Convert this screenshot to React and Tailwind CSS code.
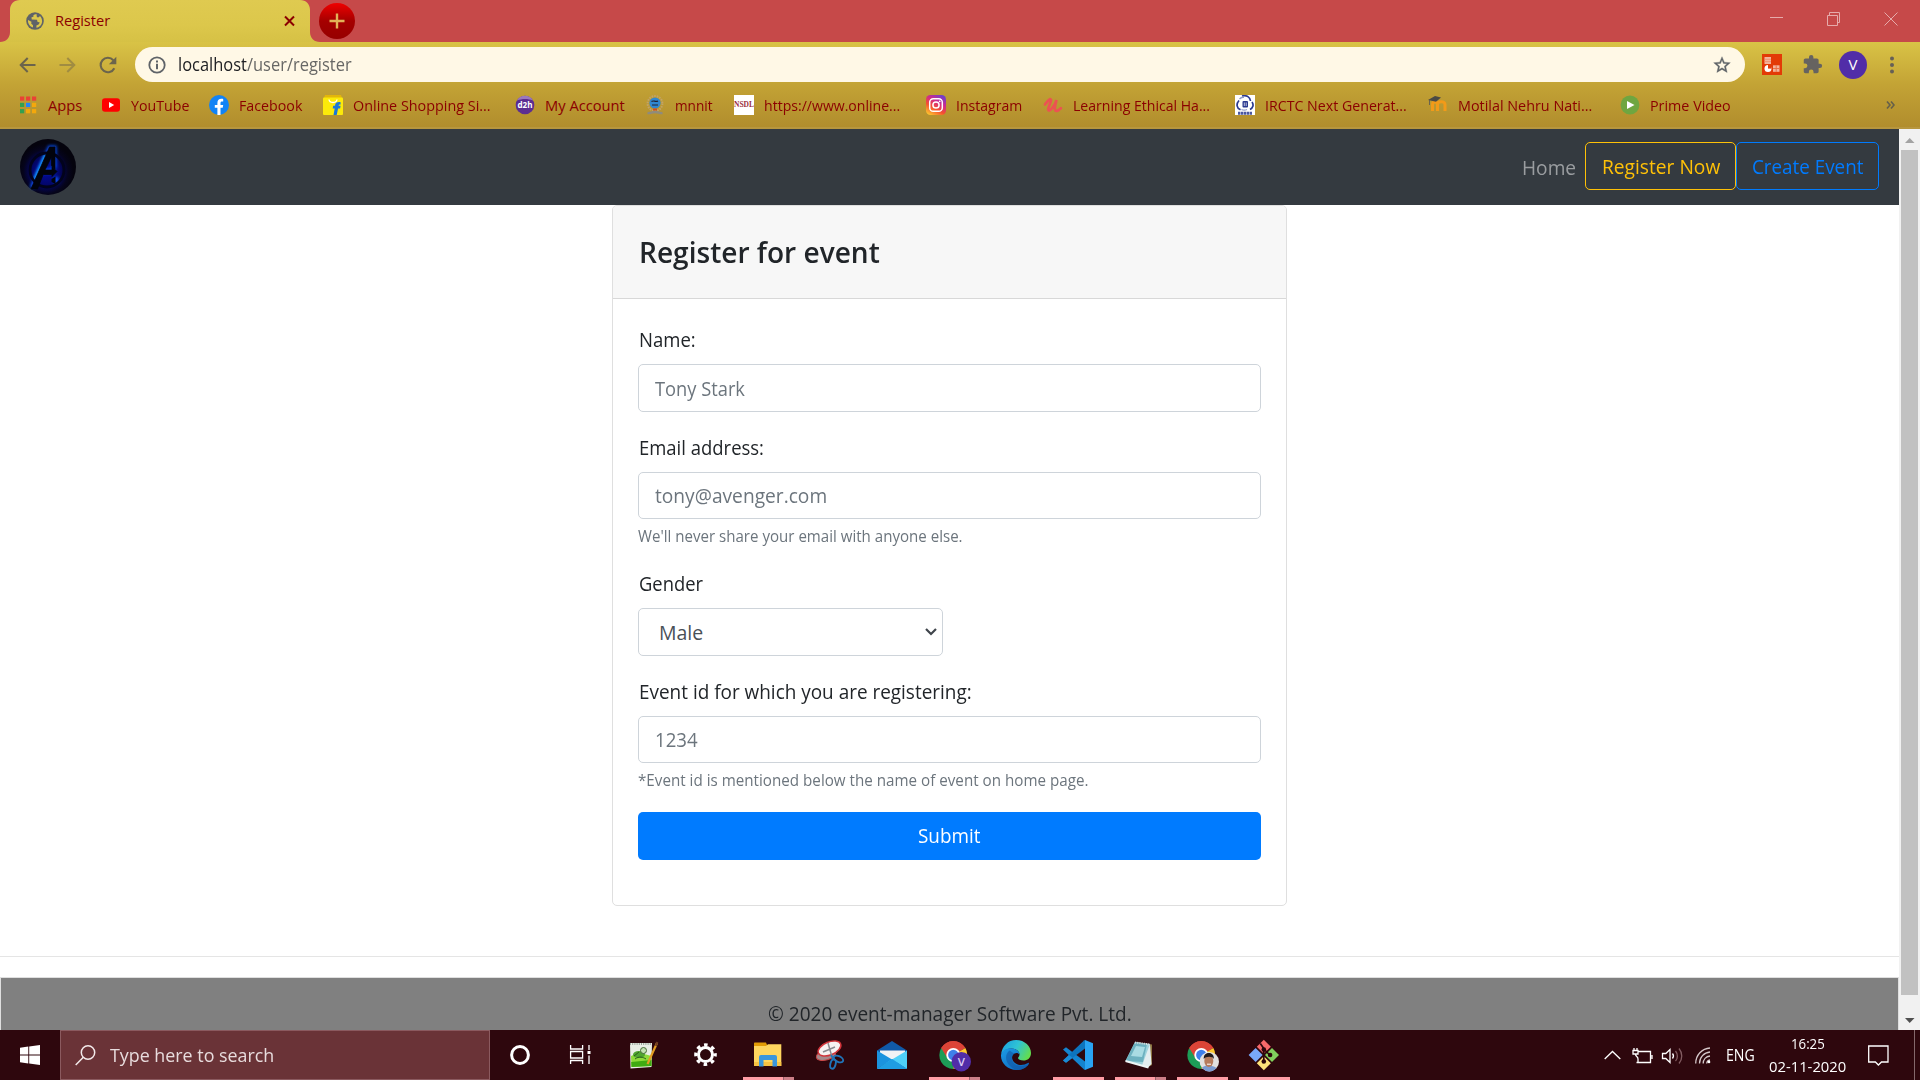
import React, { useLayoutEffect, useRef, useState } from "react";

/* Single line of text condensed or widened to an exact width. */
function Fit({ w, className = "", children }) {
  const ref = useRef(null);
  const [scale, setScale] = useState(1);
  useLayoutEffect(() => {
    if (ref.current && ref.current.offsetWidth) setScale(w / ref.current.offsetWidth);
  }, [w]);
  return (
    <span className={"inline-block whitespace-nowrap text-left " + className} style={{ width: w }}>
      <span ref={ref} className="inline-block origin-left whitespace-nowrap" style={{ transform: `scaleX(${scale})` }}>
        {children}
      </span>
    </span>
  );
}

/* ---------- bookmark icons, 20 x 20 ---------- */
const Icon20 = ({ children }) => (
  <svg width="20" height="20" viewBox="0 0 20 20" className="shrink-0">{children}</svg>
);

const AppsIcon = () => (
  <Icon20>
    {["#e94335", "#e94335", "#e94335", "#34a04f", "#2684f5", "#f4a80c", "#34a04f", "#f4a80c", "#f4a80c"].map((c, i) => (
      <rect key={i} x={2 + (i % 3) * 6} y={1.5 + Math.floor(i / 3) * 6.3} width="4.2" height="4.2" fill={c} />
    ))}
  </Icon20>
);
const YouTubeIcon = () => (
  <Icon20>
    <rect x="1" y="3.2" width="18" height="13.6" rx="3" fill="#f00" />
    <path d="M8 7l5.2 3L8 13z" fill="#fff" />
  </Icon20>
);
const FacebookIcon = () => (
  <Icon20>
    <circle cx="10" cy="10" r="10" fill="#1183f5" />
    <path d="M8.4 20v-7.2H5.8V10h2.6V7.900c0-2.700 1.600-4.100 3.900-4.100.9 0 1.900.2 1.900.2v2.500h-1.100c-1.200 0-1.600.7-1.600 1.500v2h2.700l-.5 2.800h-2.200V20z" fill="#fff" />
  </Icon20>
);
const FlipkartIcon = () => (
  <Icon20>
    <path d="M2 0h16l1 3H1z" fill="#e3b60a" />
    <rect x="0" y="2.6" width="20" height="17.4" rx="1" fill="#fcea0a" />
    <path d="M6 4.500c.5 4 7.500 4 8 0" stroke="#fff" strokeWidth="1.3" fill="none" />
    <path d="M17.600 7.200c-4.200-.6-5.400 1-5.600 3.600h-1.800l-.5 2.600h2L10.500 20h3.200l1.400-6.600h2l.5-2.600h-2c.2-1 .6-1.400 2-1.200z" fill="#1c78d8" />
  </Icon20>
);
const D2hIcon = () => (
  <Icon20>
    <circle cx="10" cy="10" r="9.3" fill="#5c2d91" />
    <path d="M2 5.500a9.200 9.200 0 0116 0c-5-2-11-2-16 0z" fill="#9a78bd" />
    <text x="2.500" y="13" fontFamily="Open Sans" fontSize="9" fontWeight="700" fill="#fff" textLength="15" lengthAdjust="spacingAndGlyphs">d2h</text>
  </Icon20>
);
const MnnitIcon = () => (
  <Icon20>
    <circle cx="10" cy="8.500" r="7.400" fill="none" stroke="#c2a367" strokeWidth="2" strokeDasharray="1.600 1" />
    <circle cx="10" cy="8" r="5.600" fill="#2f86cf" />
    <path d="M6.500 6.500c2-1.600 4 1 6.500-.6M7 10h6" stroke="#223" strokeWidth="1.200" fill="none" />
    <path d="M2.500 18c3 .6 4-1 7.500-1s4.500 1.600 7.500 1" stroke="#8f8b7c" strokeWidth="2.400" fill="none" />
    <path d="M8 14.500h4" stroke="#d14c20" strokeWidth="2" />
  </Icon20>
);
const NsdlIcon = () => (
  <Icon20>
    <rect width="20" height="20" fill="#fff" />
    <text x="0" y="12.200" fontFamily="Liberation Serif" fontSize="7.500" fontWeight="700" fill="#9b2f3e" textLength="20" lengthAdjust="spacingAndGlyphs">NSDL</text>
  </Icon20>
);
const InstagramIcon = () => (
  <Icon20>
    <defs>
      <linearGradient id="insta" x1="0.2" y1="1" x2="0.8" y2="0">
        <stop offset="0" stopColor="#fdc12f" />
        <stop offset=".35" stopColor="#f5502f" />
        <stop offset=".65" stopColor="#cf2a8c" />
        <stop offset="1" stopColor="#6a3fd0" />
      </linearGradient>
    </defs>
    <rect width="20" height="20" rx="4.500" fill="url(#insta)" />
    <rect x="3.700" y="3.700" width="12.600" height="12.600" rx="3.600" fill="none" stroke="#fff" strokeWidth="1.500" />
    <circle cx="10" cy="10" r="3.100" fill="none" stroke="#fff" strokeWidth="1.500" />
    <circle cx="13.700" cy="6.300" r=".9" fill="#fff" />
  </Icon20>
);
const UdemyIcon = () => (
  <Icon20>
    <path d="M2 9.500C4.500 6.500 6 4 7.600 4.200 9.500 4.800 5 11.500 5.200 14.300c.3 3.700 6.300-2.300 8.300-9.300-1.200 4.500-2.700 10-.6 10.800 1.600.6 3.300-1 5-2.600" fill="none" stroke="#ec5252" strokeWidth="2.700" strokeLinecap="round" />
  </Icon20>
);
const IrctcIcon = () => (
  <Icon20>
    <rect width="20" height="20" fill="#fff" />
    <path d="M7 1c5-1 8 1 8.500 5M17 7c2 3 1 6-2 7.500M4 5.500C1 9 1.500 13 5.500 14.800" fill="none" stroke="#2b3990" strokeWidth="1.700" />
    <path d="M4.500 4c1.500-1.600 3-2 4.500-1.600M12 14.500c-2 1-4 .8-5.500 0" stroke="#8f99c9" strokeWidth="1.300" fill="none" />
    <rect x="7.500" y="6" width="5.500" height="6.500" rx="1" fill="#2b3990" />
    <path d="M9.300 7.500v3.500M11.200 7.500v3.500" stroke="#fff" strokeWidth=".7" />
    <path d="M3 18.300h14" stroke="#4b57a0" strokeWidth="3" strokeDasharray="2.400 .5" />
  </Icon20>
);
const MoodleIcon = () => (
  <Icon20>
    <path d="M4.500 16V9.500c0-3.500 5-3.500 5 0V16M9.500 9.500c0-3.500 7.500-4 7.500 0V16" fill="none" stroke="#f29a18" strokeWidth="3" />
    <path d="M0 5l7-4 6 1.500-5 4.300z" fill="#4b4a45" />
    <path d="M1.500 5v5" stroke="#555" strokeWidth=".8" />
  </Icon20>
);
const PrimeIcon = () => (
  <Icon20>
    <circle cx="10" cy="10" r="9.400" fill="#6fa640" />
    <path d="M7 6l7.500 4L7 14z" fill="#fff" />
  </Icon20>
);

const bookmarks = [
  [AppsIcon, "Apps", 34],
  [YouTubeIcon, "YouTube", 58],
  [FacebookIcon, "Facebook", 63],
  [FlipkartIcon, "Online Shopping Si...", 138],
  [D2hIcon, "My Account", 80],
  [MnnitIcon, "mnnit", 38],
  [NsdlIcon, "https://www.online...", 136],
  [InstagramIcon, "Instagram", 66],
  [UdemyIcon, "Learning Ethical Ha...", 137],
  [IrctcIcon, "IRCTC Next Generat...", 142],
  [MoodleIcon, "Motilal Nehru Nati...", 134],
  [PrimeIcon, "Prime Video", 81],
];

function TabStrip() {
  return (
    <div className="flex h-[42px] bg-[#c64949]">
      <div className="relative flex h-[42px] w-[320px] items-center">
        <svg width="320" height="42" viewBox="0 0 320 42" className="absolute inset-0">
          <defs>
            <linearGradient id="tab" x1="0" y1="0" x2="0" y2="1">
              <stop offset="0" stopColor="#dfca50" />
              <stop offset=".6" stopColor="#dcc74b" />
              <stop offset="1" stopColor="#d6c145" />
            </linearGradient>
          </defs>
          <path d="M0 42c6 0 10-4 10-10V10C10 4 14 0 20 0h280c6 0 10 4 10 10v22c0 6 4 10 10 10z" fill="url(#tab)" />
        </svg>
        <svg width="18" height="18" viewBox="0 0 18 18" className="relative ml-[26px]">
          <circle cx="9" cy="9" r="8.800" fill="#5f6368" />
          <path d="M10.500 2c-3 .3-3.500 1.500-3 2.800l-2 .4.200 2.300 5.300.3.600 2.200 2 .3c-.2 2-1.500 2.800-3.200 3.200v2.200c3.500-.6 5.700-3.500 5.700-6.500 0-2-.8-4-2.200-5.200l-1 1.200-2 .1zM2 8c-.3 3.800 2 6.600 5 7.500v-2.200L5.200 11.500l.3-1.800z" fill="#dcc74b" />
        </svg>
        <Fit w={55} className="relative ml-[11px] text-[14.600px] text-[#8b0000]">Register</Fit>
        <svg width="11" height="12" viewBox="0 0 11 12" className="relative ml-[174px]">
          <path d="M1 1.500l9 9M10 1.500l-9 9" stroke="#8b0000" strokeWidth="2" />
        </svg>
      </div>
      <div className="mt-[3px] -ml-px flex h-[36px] w-[36px] items-center justify-center rounded-full bg-linear-to-b from-[#f00000] via-[#a50000] to-[#960000]">
        <svg width="16" height="16" viewBox="0 0 16 16">
          <path d="M8 .5v15M.5 8h15" stroke="#e2b258" strokeWidth="2.400" />
        </svg>
      </div>
      <div className="ml-auto flex pr-px pt-[12px]">
        <svg width="149" height="14" viewBox="0 0 149 14" fill="none" stroke="#e6abab" strokeWidth="1">
          <path d="M0 5.500h13M57.500 3.500h10v10h-10zM59.500 3.500v-3h10v10h-2M114.500 .5l13 13M127.500 .5l-13 13" />
        </svg>
      </div>
    </div>
  );
}

function Toolbar() {
  return (
    <div className="h-[87px] border-b-2 border-[#b7963e] bg-linear-to-b from-[#d9c346] via-[#c3a335] to-[#b18d2d]">
      <div className="flex h-[45px] items-center">
        <svg width="17" height="16" viewBox="0 0 17 16" className="ml-[19px]" fill="none" stroke="#6b644c" strokeWidth="2">
          <path d="M16.500 8H2M8.700 1L1.700 8l7 7" />
        </svg>
        <svg width="17" height="16" viewBox="0 0 17 16" className="ml-[23px]" fill="none" stroke="#a08c42" strokeWidth="2">
          <path d="M.5 8H15M8.300 1l7 7-7 7" />
        </svg>
        <svg width="18" height="18" viewBox="0 0 18 18" className="ml-[23px]">
          <path d="M15.300 12.200A7.200 7.200 0 1 1 14.300 4.300" fill="none" stroke="#6b644c" strokeWidth="2.100" />
          <path d="M17.300 .8v7.400H9.900z" fill="#6b644c" />
        </svg>
        <div className="ml-[18px] flex h-[35px] w-[1610px] items-center rounded-full bg-[#fff8e6]">
          <svg width="18" height="18" viewBox="0 0 18 18" className="ml-[13px]">
            <circle cx="9" cy="9" r="7.700" fill="none" stroke="#5f6368" strokeWidth="1.800" />
            <path d="M9 7.800v5.400M9 4.600v2" stroke="#5f6368" strokeWidth="2" />
          </svg>
          <Fit w={174} className="ml-[12px] text-[17.600px] text-[#676765]">
            <span className="text-[#202124]">localhost</span>/user/register
          </Fit>
          <svg width="20" height="20" viewBox="0 0 24 24" className="ml-auto mr-[13px]">
            <path d="M22 9.240l-7.190-.62L12 2 9.190 8.630 2 9.240l5.460 4.730L5.820 21 12 17.270 18.180 21l-1.630-7.030L22 9.240zM12 15.400l-3.760 2.270 1-4.280-3.320-2.880 4.380-.38L12 6.100l1.710 4.040 4.380.38-3.320 2.880 1 4.280L12 15.400z" fill="#5f6368" stroke="#5f6368" strokeWidth=".4" />
          </svg>
        </div>
        <svg width="20" height="21" viewBox="0 0 20 21" className="ml-[17px]">
          <rect width="20" height="21" fill="#e33a06" />
          <path d="M2.500 3h6.500v7H2.500z" fill="#f3b49c" />
          <path d="M2.500 5.300h6.500M2.500 7.600h6.500" stroke="#ec8b68" strokeWidth=".8" />
          <circle cx="6" cy="14.600" r="3.500" fill="#fff" />
          <path d="M6 14.600V11h3.600v3.600z" fill="#e33a06" />
          <path d="M11 11.300h6.500v6.500H11z" fill="#f3b49c" />
          <path d="M14.200 11.300v6.500M11 14.500h6.500" stroke="#e86a40" strokeWidth=".9" />
        </svg>
        <svg width="21" height="21" viewBox="0 0 24 24" className="ml-[20px]">
          <path d="M20.500 11H19V7c0-1.100-.9-2-2-2h-4V3.500a2.500 2.500 0 0 0-5 0V5H4c-1.100 0-2 .9-2 2v3.800h1.500a2.700 2.700 0 0 1 0 5.400H2V20c0 1.100.9 2 2 2h3.800v-1.500a2.700 2.700 0 0 1 5.400 0V22H17c1.100 0 2-.9 2-2v-4h1.500a2.500 2.500 0 0 0 0-5z" fill="#666360" />
        </svg>
        <div className="ml-[16px] flex h-[28px] w-[28px] items-center justify-center rounded-full bg-[#512da8] text-[15px] text-white">V</div>
        <svg width="4" height="18" viewBox="0 0 4 18" className="ml-[23px]" fill="#666057">
          <circle cx="2" cy="2.500" r="2" /><circle cx="2" cy="9" r="2" /><circle cx="2" cy="15.500" r="2" />
        </svg>
      </div>
      <div className="flex h-[36px] items-center">
        <div className="grid grid-cols-[83px_108px_114px_192px_130px_89px_192px_117px_192px_193px_192px_150px] pl-[18px]">
          {bookmarks.map(([I, label, w]) => (
            <div key={label} className="flex items-center gap-[10px]">
              <I />
              <Fit w={w} className="text-[14.700px] leading-5 text-[#8b0000]">{label}</Fit>
            </div>
          ))}
        </div>
        <svg width="9" height="8" viewBox="0 0 9 8" className="ml-auto mr-[25px]" fill="none" stroke="#66604a" strokeWidth="1.600">
          <path d="M1 .5L4 4 1 7.500M5 .5L8 4 5 7.500" />
        </svg>
      </div>
    </div>
  );
}

function AvengersLogo() {
  return (
    <svg width="56" height="56" viewBox="0 0 56 56">
      <defs>
        <radialGradient id="glow" cx=".46" cy=".58" r=".5">
          <stop offset="0" stopColor="#020c9a" />
          <stop offset=".45" stopColor="#03066e" />
          <stop offset=".8" stopColor="#05041c" />
          <stop offset="1" stopColor="#04030d" />
        </radialGradient>
        <filter id="soft" x="-30%" y="-30%" width="160%" height="160%"><feGaussianBlur stdDeviation="1.500" /></filter>
      </defs>
      <circle cx="28" cy="28" r="28" fill="url(#glow)" />
      <path d="M12 49L30 9h4v20M21 32h14M36 38v6" fill="none" stroke="#0a50f0" strokeWidth="5" filter="url(#soft)" />
      <path d="M15 41L26 16" fill="none" stroke="#19a4ff" strokeWidth="3.500" filter="url(#soft)" />
      <circle cx="27" cy="31" r="17" fill="none" stroke="#02031c" strokeWidth="2.800" />
      <path d="M29.500 8H35v22l-3.600-3.400V18L25 31h7v-3.500l5 5-5 5V35.500h-8.800L17.500 50H11z" fill="#01030c" stroke="#01030c" strokeWidth=".8" />
      <path d="M31.500 40l4-2.500V45l-4-2z" fill="#01030c" />
    </svg>
  );
}

function Navbar() {
  return (
    <nav className="flex h-[76px] shrink-0 items-center bg-[#343a40] pl-[20px] pr-[20px]">
      <AvengersLogo />
      <Fit w={54} className="ml-auto mr-[9px] pt-[2px] text-[19.500px] leading-[30px] text-[#9a9da0]">Home</Fit>
      <div className="-mt-[2px] flex h-[48px] w-[151px] items-center justify-center rounded-[5px] border border-[#ffc107] pt-[2px] text-[19.500px] leading-[30px] text-[#ffc107]">
        <Fit w={118}>Register Now</Fit>
      </div>
      <div className="-mt-[2px] flex h-[48px] w-[143px] items-center justify-center rounded-[5px] border border-[#007bff] pt-[2px] text-[19.500px] leading-[30px] text-[#007bff]">
        <Fit w={111}>Create Event</Fit>
      </div>
    </nav>
  );
}

function Field({ label, labelW, value, valueW, help, helpW }) {
  return (
    <div className="mb-[20px]">
      <div className="h-[30px] pl-px text-[19.500px] leading-[32px]"><Fit w={labelW}>{label}</Fit></div>
      <div className="mt-[10px] flex h-[47.500px] items-center rounded-[5px] border border-[#ced4da] px-[16px] pt-[2px] text-[19.500px] leading-[30px] text-[#6c757d]">
        <Fit w={valueW}>{value}</Fit>
      </div>
      {help && (
        <div className="mt-[5px] h-[24px] text-[15.600px] leading-[24px] text-[#6c757d]"><Fit w={helpW}>{help}</Fit></div>
      )}
    </div>
  );
}

function RegisterCard() {
  return (
    <div className="mx-auto h-[701px] w-[675px] shrink-0 rounded-[5px] border border-[#dfdfdf] bg-white text-[#212529]">
      <div className="flex h-[93px] items-center rounded-t-[4px] border-b border-[#d8d8d8] bg-[#f7f7f7] pl-[26px] text-[29px] leading-[36px] font-semibold">
        <Fit w={241}>Register for event</Fit>
      </div>
      <div className="px-[25px] pt-[25px]">
        <Field label="Name:" labelW={57} value="Tony Stark" valueW={90} />
        <Field label="Email address:" labelW={125} value="tony@avenger.com" valueW={172} help="We'll never share your email with anyone else." helpW={325} />
        <div className="mb-[20px]">
          <div className="h-[30px] pl-px text-[19.500px] leading-[32px]"><Fit w={64}>Gender</Fit></div>
          <div className="mt-[10px] flex h-[47.500px] w-[305px] items-center rounded-[5px] border border-[#ced4da] pl-[20px] pr-[5px] pt-[2px] text-[19.500px] leading-[30px] text-[#495057]">
            <Fit w={44}>Male</Fit>
            <svg width="12" height="8" viewBox="0 0 12 8" className="-mt-[2px] ml-auto" fill="none" stroke="#3f454b" strokeWidth="2.200">
              <path d="M1 1l5 5 5-5" />
            </svg>
          </div>
        </div>
        <Field label="Event id for which you are registering:" labelW={333} value="1234" valueW={43} help="*Event id is mentioned below the name of event on home page." helpW={450} />
        <button className="flex h-[47.500px] w-full items-center justify-center rounded-[5px] bg-[#007bff] pt-px text-[19.500px] leading-[30px] text-white">
          <Fit w={63}>Submit</Fit>
        </button>
      </div>
    </div>
  );
}

function Scrollbar() {
  return (
    <div className="flex w-[21px] flex-col items-center bg-[#f1f1f1]">
      <svg width="21" height="21" viewBox="0 0 21 21"><path d="M6 14h9.500L10.700 9z" fill="#a3a3a3" /></svg>
      <div className="h-[845px] w-[17px] bg-[#c1c1c1]" />
      <svg width="21" height="35" viewBox="0 0 21 35"><path d="M6 23h9.500l-4.800 5z" fill="#505050" /></svg>
    </div>
  );
}

/* ---------- taskbar ---------- */
const Chrome = () => (
  <g>
    <path d="M29 25L16.900 18A14 14 0 0 1 41.100 18z" fill="#dc4437" />
    <path d="M29 25L41.100 18A14 14 0 0 1 29 39z" fill="#fdc92f" />
    <path d="M29 25v14A14 14 0 0 1 16.900 18z" fill="#1d9d57" />
    <path d="M29 18h12.100A14 14 0 0 0 16.900 18l6.100 10z" fill="#dc4437" />
    <circle cx="29" cy="25" r="7" fill="#fff" />
    <circle cx="29" cy="25" r="5.200" fill="#3f80ea" />
  </g>
);

const tasks = [
  { art: <circle cx="31" cy="25" r="8.400" fill="none" stroke="#fff" strokeWidth="3" /> },
  {
    art: (
      <g fill="none" stroke="#fff" strokeWidth="1.300">
        <path d="M19.600 15v4h12v-4M19.600 34v-3.500h12V34M19.600 21.500h12v6.500h-12zM38 15v5M38 25.500V34" />
        <path d="M36.500 22.500h3" strokeWidth="3" />
      </g>
    ),
  },
  {
    art: (
      <g>
        <path d="M17 13h22l-.5 24L17.500 38.500z" fill="#e9efe6" />
        <path d="M18 26c7-3 14-2 20.500 0v10L18.500 37z" fill="#8edb3a" />
        <path d="M18.200 32l20.300-2v6L18.500 37z" fill="#3faa12" />
        <path d="M17 14h22" stroke="#9aa39a" strokeWidth="2" strokeDasharray="1 1.200" />
        <ellipse cx="26" cy="24.500" rx="6" ry="3.600" fill="#4fa52f" />
        <circle cx="30.500" cy="20.500" r="3" fill="#c4e3b3" stroke="#456b36" />
        <path d="M21 26l5-4M22 29c4-3 8-2 11 0" stroke="#2b5d1d" fill="none" />
        <path d="M34.500 34L44 13" stroke="#e39d22" strokeWidth="2.200" />
        <path d="M42.800 15.800L44.400 12" stroke="#6e3b22" strokeWidth="2" />
      </g>
    ),
  },
  {
    art: (
      <g fill="none" stroke="#fff">
        <circle cx="30.500" cy="24.600" r="7" strokeWidth="3" />
        <circle cx="30.500" cy="24.600" r="9.700" strokeWidth="3.200" strokeDasharray="3.600 4.018" strokeDashoffset="1.800" />
      </g>
    ),
  },
  {
    bar: "multi",
    art: (
      <g>
        <path d="M17 13.500c0-.6.400-1 1-1h11l1.500 3.500H17z" fill="#e39c06" />
        <path d="M17 16h12l2-1.800h13.300V36H17z" fill="#ffd65f" />
        <path d="M17 32h27.300v4H17z" fill="#f7c243" />
        <path d="M22 36.500V27a2 2 0 0 1 2-2h14a2 2 0 0 1 2 2v9.500h-4.500V30h-9v6.500z" fill="#3a96dd" />
      </g>
    ),
  },
  {
    art: (
      <g>
        <ellipse cx="27" cy="25" rx="10" ry="5" transform="rotate(-15 27 25)" fill="#a5898c" stroke="#c94747" />
        <ellipse cx="30.500" cy="18.500" rx="12" ry="6.500" transform="rotate(-22 30.500 18.500)" fill="#f6f2f2" stroke="#d0343a" strokeWidth="1.500" />
        <path d="M29 13l4 14M24 22l12-5" stroke="#8b8b90" strokeWidth="1.500" />
        <g fill="none" stroke="#2074b8" strokeWidth="1.900">
          <ellipse cx="39.500" cy="29" rx="5" ry="2.800" transform="rotate(25 39.500 29)" />
          <ellipse cx="34" cy="34" rx="2.600" ry="4.800" transform="rotate(15 34 34)" />
          <path d="M32 25l3 5" />
        </g>
      </g>
    ),
  },
  {
    art: (
      <g>
        <path d="M16 20.500L31 11l15 9.500V30H16z" fill="#1059a8" />
        <path d="M19 20.500h25v12H19z" fill="#f1f3f5" />
        <path d="M16 20.500l15 9-15 9.500z" fill="#1b93de" />
        <path d="M46 20.500l-15 9 15 9.500z" fill="#4fd0f8" />
        <path d="M16 39l15-10 15 10z" fill="#2aabe9" />
        <path d="M16 39l15-10 8 5.200L46 39z" fill="#1f9de2" />
      </g>
    ),
  },
  {
    bar: "multi",
    art: (
      <g transform="translate(1.300 0)">
        <Chrome />
        <circle cx="37" cy="31.700" r="9.700" fill="#512da8" />
        <text x="37" y="36" textAnchor="middle" fontFamily="Open Sans" fontSize="11.500" fontWeight="600" fill="#dccdf5">V</text>
      </g>
    ),
  },
  {
    art: (
      <g>
        <defs>
          <linearGradient id="edgeTop" x1="0" y1=".2" x2="1" y2=".6">
            <stop offset="0" stopColor="#1ba0e0" /><stop offset=".5" stopColor="#2fc4d4" /><stop offset="1" stopColor="#63dd4d" />
          </linearGradient>
          <linearGradient id="edgeLow" x1="0" y1="0" x2="1" y2="1">
            <stop offset="0" stopColor="#1c9be6" /><stop offset="1" stopColor="#0b61b8" />
          </linearGradient>
        </defs>
        <path d="M16 25C17 16 23 10 31 10c9 0 15 6.500 15 13 0 5-3.500 7.500-7.500 7.500-3 0-5.500-1-5.500-2.500 0-.8 1.500-1.500 1.500-3.500 0-3-3.500-6-8-6-5 0-9 2.500-10.500 6.500z" fill="url(#edgeTop)" />
        <path d="M16 25c1-4.500 5-6.800 9.500-6.800 5.500 0 9 3.300 9 6.300-1-1.500-3-2-5-1-3 1.500-3 5.500-1 8 3 4 9.500 4.500 14.500 1.500.8-.4 1.200.2.800.9C41.500 37.800 36.500 40 31.500 40 22.500 40 15.500 33 16 25z" fill="url(#edgeLow)" />
        <path d="M24.500 20.500c-4.500 3.500-4.500 10-.5 14.500 2.500 3 6 4.800 9 4.900 4.500-.3 8-2.700 10.500-6-6 3.500-13 2.500-15.500-2-2-3.500-1-7 1.500-8.400-1.500-.5-3.500-2-5-3z" fill="#1257a5" opacity=".6" />
      </g>
    ),
  },
  {
    bar: "single",
    art: (
      <g>
        <path d="M38 10L46 13.200v23.600L38 40z" fill="#29a3f2" />
        <path d="M16 19.500l3-2.200L38 31.500V40L37 39.500z" fill="#1484cf" />
        <path d="M16 30.500l3 2.200L38 18.500V10l-1 .5z" fill="#0d74bd" />
        <path d="M16 30.500L22 25l3.500 2.700L19 32.700z" fill="#1a8ad4" />
      </g>
    ),
  },
  {
    bar: "multi",
    art: (
      <g>
        <path d="M27 12l16 2.500V35l-4 2z" fill="#8c7440" />
        <path d="M26 12l15 2-2 23.500L16.500 31z" fill="#9fd3dd" />
        <path d="M26 12l12 2-4 18-17.500-1z" fill="#6db1c0" />
        <path d="M27 16l9 1-3 10-11-1z" fill="#a9dbe3" />
        <path d="M41 14l1.500 20-3.500 3.500-6-2z" fill="#e3edf0" />
        <path d="M16.500 31l23 6.500" stroke="#eef5f6" strokeWidth="2" />
        <path d="M26 12.500l15 2" stroke="#d5d8da" strokeWidth="2" strokeDasharray="1.200 1" />
      </g>
    ),
  },
  {
    bar: "single",
    art: (
      <g transform="translate(1.300 0)">
        <Chrome />
        <clipPath id="face"><circle cx="37" cy="31.700" r="9.700" /></clipPath>
        <g clipPath="url(#face)">
          <rect x="27" y="21" width="20" height="21" fill="#e2e1e0" />
          <path d="M28 42c1-6 4-6 8-6s9 0 10 6z" fill="#7b9bd0" />
          <ellipse cx="36.500" cy="31" rx="4.500" ry="6" fill="#b67b5c" />
          <path d="M31.500 29c-1-8 11-8 10 0-1-3-8-3-10 0z" fill="#211b1c" />
          <path d="M34.700 34.200h4" stroke="#fff" strokeWidth="1" />
        </g>
      </g>
    ),
  },
  {
    bar: "single",
    art: (
      <g transform="translate(30.800 25)">
        <path d="M0-15.200L7-8.200 0-1.200-7-8.200z" fill="#f8696b" />
        <path d="M8.200-7L15.200 0 8.200 7 1.200 0z" fill="#80cf5c" />
        <path d="M0 1.200L7 8.200 0 15.200-7 8.200z" fill="#ffe27a" />
        <path d="M-8.200-7L-1.200 0-8.200 7-15.200 0z" fill="#79a8fa" />
        <path d="M-3.500-11.500L0-6.500V7M0-6L6 0" stroke="#2b070c" strokeWidth="1.700" fill="none" />
        <circle cx="0" cy="-5.500" r="2.300" fill="#2b070c" /><circle cx="6.300" cy="0" r="2.300" fill="#2b070c" /><circle cx="0" cy="6.500" r="2.300" fill="#2b070c" />
      </g>
    ),
  },
];

function Taskbar() {
  return (
    <div className="flex h-[50px] bg-[#2e070d] text-white">
      <div className="flex w-[60px] items-center justify-center">
        <svg width="20" height="20" viewBox="0 0 20 20" fill="#fff">
          <path d="M0 2.700L8.300 1.500V9.400H0zM9.200 1.400L20 0v9.400H9.200zM0 10.400h8.300v8L0 17.300zM9.200 10.400H20V20L9.200 18.500z" />
        </svg>
      </div>
      <div className="flex w-[430px] items-center border border-[#8b5a5f] bg-[#6a3337] pl-[14px]">
        <svg width="21" height="21" viewBox="0 0 21 21" fill="none" stroke="#f3eaea" strokeWidth="1.500">
          <circle cx="13" cy="7.500" r="6.700" /><path d="M8.300 12.300L.7 20" />
        </svg>
        <Fit w={164} className="ml-[14px] text-[18.500px] leading-6 text-[#e8dcdd]">Type here to search</Fit>
      </div>
      <div className="-ml-px flex">
        {tasks.map((t, i) => (
          <div key={i} className="flex w-[62px] flex-col">
            <svg width="62" height="47" viewBox="0 0 62 47">{t.art}</svg>
            {t.bar && (
              <div className="ml-[6px] flex h-[3px] w-[51px] bg-[#ff9da5]">
                {t.bar === "multi" && <div className="ml-auto w-[11px] border-l border-[#96606a] bg-[#cc7f88]" />}
              </div>
            )}
          </div>
        ))}
      </div>
      <div className="ml-auto flex items-center">
        <svg width="108" height="20" viewBox="0 0 108 20" fill="none" stroke="#fff" strokeWidth="1.300">
          <path d="M.7 14L8.500 6.500 16.300 14" />
          <path d="M34 6.500h12.500v11H34M32.500 17.500h4M48 10v4" />
          <path d="M29 5.500h5v3.500h-5zM30 5.500V3M33 5.500V3M31.500 9c0 3 2.500 2 2.500 5v3.500" />
          <path d="M58.500 8.500h3.300l4.200-4v13l-4.200-4h-3.300z" />
          <path d="M68.500 8.500c1.200 1.500 1.200 3.500 0 5" />
          <path d="M71.500 6c2.500 3 2.500 7.500 0 10M75 3.500c3.700 4.500 3.700 10.500 0 15" stroke="#835c61" />
          <path d="M91.700 18.500C91.700 10 98 3.500 106 3M95.500 18.500c0-6.200 4.500-11 10.500-11.500M99.200 18.500c0-4 2.800-7 6.800-7.500" stroke="#d6c8ca" />
          <path d="M102.700 18.500c.2-2 1.500-3.300 3.300-3.500" stroke="#d6c8ca" />
          <circle cx="105" cy="17" r="1.300" fill="#fff" stroke="none" />
        </svg>
        <Fit w={29} className="ml-[14px] text-[15.600px] leading-5">ENG</Fit>
        <div className="ml-[14px] flex w-[77px] flex-col items-center text-[15.200px] leading-[23px]">
          <Fit w={34} className="h-[23px]">16:25</Fit>
          <Fit w={77} className="h-[23px]">02-11-2020</Fit>
        </div>
        <svg width="21" height="21" viewBox="0 0 21 21" className="ml-[22px]" fill="none" stroke="#fff" strokeWidth="1.300">
          <path d="M.7 1h19.300v16h-6.500L10.400 20l-3-3H.7z" />
        </svg>
        <div className="ml-[25px] mr-[5px] h-[50px] w-px bg-[#84686b]" />
      </div>
    </div>
  );
}

export default function App() {
  return (
    <div className="flex h-[1080px] w-[1920px] flex-col overflow-hidden bg-white font-['Open_Sans','Noto_Sans',sans-serif]">
      <TabStrip />
      <Toolbar />
      <div className="flex h-[901px]">
        <main className="flex w-[1899px] flex-col overflow-hidden">
          <Navbar />
          <RegisterCard />
          <div className="mt-[50px] h-px shrink-0 bg-[#e5e5e5]" />
          <footer className="mt-[20px] h-[60px] shrink-0 border border-[#dfdfdf] bg-[#808080] pt-[20px] text-center text-[19.500px] leading-[32px] text-[#212529]">
            <Fit w={364}>© 2020 event-manager Software Pvt. Ltd.</Fit>
          </footer>
        </main>
        <Scrollbar />
      </div>
      <Taskbar />
    </div>
  );
}
